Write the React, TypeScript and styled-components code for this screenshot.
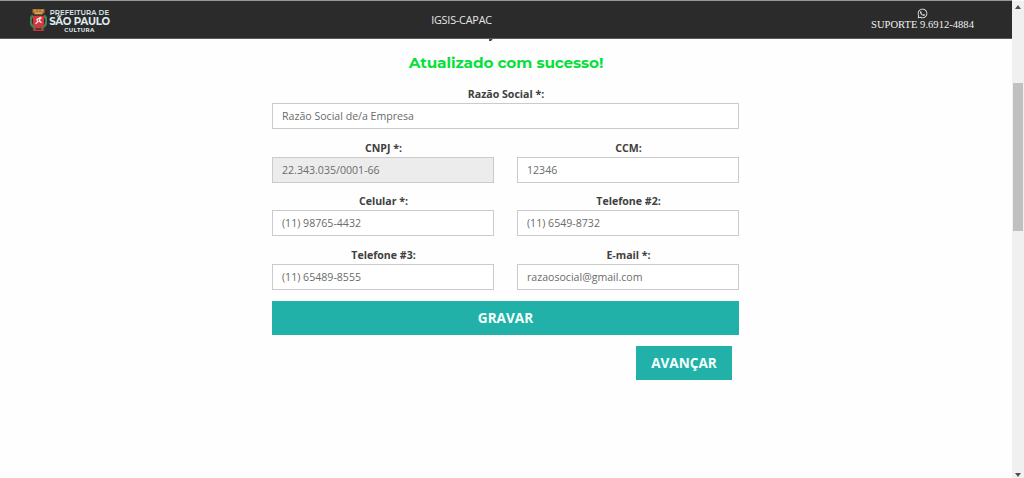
import React from "react";
import styled, { createGlobalStyle } from "styled-components";
import { FaWhatsapp } from "react-icons/fa";

const GlobalStyle = createGlobalStyle`
  * { box-sizing: border-box; }
  body { margin: 0; background: #fefefe; overflow: hidden; font-family: "Open Sans", sans-serif; }
`;

const Page = styled.div`
  display: flex;
  height: 478px;
  overflow: hidden;
`;

const Main = styled.div`
  flex: 1;
  min-width: 0;
`;

const Header = styled.header`
  display: grid;
  grid-template-columns: 338px 247px 1fr;
  height: 39px;
  background: #2b2b2b;
  border-top: 1px solid #979998;
  border-bottom: 1px solid #5a5a5a;
  color: #e6e6e6;
`;

const Brand = styled.div`
  display: flex;
  padding: 7px 0 0 30px;
`;

const Crest = styled.svg`
  width: 17px;
  height: 24px;
`;

const BrandText = styled.div`
  width: 61px;
  margin-left: 2px;
  padding-top: 1px;
  display: flex;
  flex-direction: column;
  align-items: center;
  font-family: Montserrat, Lato, sans-serif;
  font-weight: 700;
  color: #dfe9ef;
  white-space: nowrap;
`;

const BrandLine = styled.span<{ $size: number; $height: number; $spacing: number; $weight?: number }>`
  font-size: ${(p) => p.$size}px;
  font-weight: ${(p) => p.$weight ?? 700};
  line-height: ${(p) => p.$height}px;
  letter-spacing: ${(p) => p.$spacing}px;
`;

const AppName = styled.div`
  text-align: center;
  font-size: 10.8px;
  font-weight: 500;
  line-height: 37px;
  letter-spacing: -0.2px;
`;

const Support = styled.div`
  display: flex;
  flex-direction: column;
  align-items: center;
  width: 427px;
  padding: 7px 0 0 248px;
  font-family: "Liberation Serif", serif;
  font-size: 10.6px;
  line-height: 11px;
  color: #f0f0f0;
  white-space: nowrap;
  svg { display: block; flex: none; }
`;

const Clip = styled.div`
  height: 2px;
  margin-left: 489px;
  overflow: hidden;
  color: #444;
  font: 700 15px/18px "Open Sans", sans-serif;
  display: flex;
  align-items: flex-end;
`;

const Form = styled.form`
  width: 467px;
  margin-left: 272px;
  padding-top: 11.2px;
`;

const Success = styled.h5`
  margin: 0 0 12px 1px;
  height: 23px;
  text-align: center;
  color: #05e03a;
  font: 700 15.3px/22px Montserrat, Inter, sans-serif;
  letter-spacing: -0.12px;
  white-space: nowrap;
`;

const Row = styled.div`
  display: flex;
  gap: 23px;
  height: 53.6px;
`;

const Field = styled.label`
  flex: 1;
  min-width: 0;
  display: block;
`;

const Label = styled.span`
  display: block;
  height: 16px;
  padding-left: 1px;
  text-align: center;
  font-size: 10.6px;
  line-height: 15.5px;
  font-weight: 700;
  color: #404040;
`;

const Input = styled.input`
  display: block;
  width: 100%;
  height: 26px;
  padding: 0 9px;
  border: 1px solid #cbcbcb;
  border-radius: 0;
  outline: 0;
  background: #fff;
  color: #6b6b6b;
  font: 400 10.6px "Open Sans", sans-serif;
  &:disabled { background: #ececec; }
`;

const Button = styled.button<{ $wide?: boolean }>`
  display: block;
  width: ${(p) => (p.$wide ? "100%" : "96px")};
  height: 34px;
  margin: ${(p) => (p.$wide ? "-0.6px 0 11px" : "0 7px 0 auto")};
  padding: 0;
  border: 0;
  background: #21b1a9;
  color: #f4fffd;
  font: 700 13.6px/34px "Open Sans", sans-serif;
`;

const Scrollbar = styled.div`
  width: 12px;
  margin-top: 1px;
  padding: 4px 1px 1px;
  background: #f0f0f0;
  display: flex;
  flex-direction: column;
  align-items: center;
`;

const Arrow = styled.svg`
  width: 6px;
  height: 4px;
  fill: #505050;
`;

const Thumb = styled.div`
  width: 10px;
  height: 148px;
  margin: 74px 0 auto;
  background: #c0c0c0;
`;

const fields = [
  [{ label: "Razão Social *:", value: "Razão Social de/a Empresa" }],
  [
    { label: "CNPJ *:", value: "22.343.035/0001-66", disabled: true },
    { label: "CCM:", value: "12346" },
  ],
  [
    { label: "Celular *:", value: "(11) 98765-4432" },
    { label: "Telefone #2:", value: "(11) 6549-8732" },
  ],
  [
    { label: "Telefone #3:", value: "(11) 65489-8555" },
    { label: "E-mail *:", value: "razaosocial@gmail.com" },
  ],
];

export default function App() {
  return (
    <Page>
      <GlobalStyle />
      <Main>
        <Header>
          <Brand>
            <Crest viewBox="0 0 17 22" preserveAspectRatio="none">
              <path d="M2.500 1h12v3l-2 2h-8l-2-2z" fill="#a87535" />
              <path d="M4 2.500h2m2 0h1m2 0h2M5 4.700h7" stroke="#e3b65a" />
              <path d="M3 7C0 9 0 13 2 16l4 3M14 7c3 2 3 6 1 9l-4 3" fill="none" stroke="#43835a" strokeWidth="2.4" />
              <path d="M3 7h11v7c0 3-3 4-5.500 5C6 18 3 17 3 14z" fill="#d9353b" />
              <path d="M5.500 14.500 8 12.500l-1-2 3-1.500-.5 3 2 1.500M10 8.500l1.500 1" fill="none" stroke="#eee9e8" strokeWidth="1.300" />
              <path d="M2.500 18.500q6 3 12 0l-1 2.500h-10z" fill="#c9353b" />
            </Crest>
            <BrandText>
              <BrandLine $size={7} $height={8} $spacing={0.06} $weight={600}>PREFEITURA DE</BrandLine>
              <BrandLine $size={10.2} $height={10} $spacing={-0.25}>SÃO PAULO</BrandLine>
              <BrandLine $size={5.6} $height={7} $spacing={0.4}>CULTURA</BrandLine>
            </BrandText>
          </Brand>
          <AppName>IGSIS-CAPAC</AppName>
          <Support>
            <FaWhatsapp size={11} />
            <span>SUPORTE 9.6912-4884</span>
          </Support>
        </Header>
        <Clip>j</Clip>
        <Form onSubmit={(e) => e.preventDefault()}>
          <Success>Atualizado com sucesso!</Success>
          {fields.map((row, i) => (
            <Row key={i}>
              {row.map((f) => (
                <Field key={f.label}>
                  <Label>{f.label}</Label>
                  <Input defaultValue={f.value} disabled={"disabled" in f} />
                </Field>
              ))}
            </Row>
          ))}
          <Button $wide>GRAVAR</Button>
          <Button>AVANÇAR</Button>
        </Form>
      </Main>
      <Scrollbar>
        <Arrow viewBox="0 0 6 4"><path d="M0 4 3 0l3 4z" /></Arrow>
        <Thumb />
        <Arrow viewBox="0 0 6 4"><path d="M0 0h6L3 4z" /></Arrow>
      </Scrollbar>
    </Page>
  );
}
